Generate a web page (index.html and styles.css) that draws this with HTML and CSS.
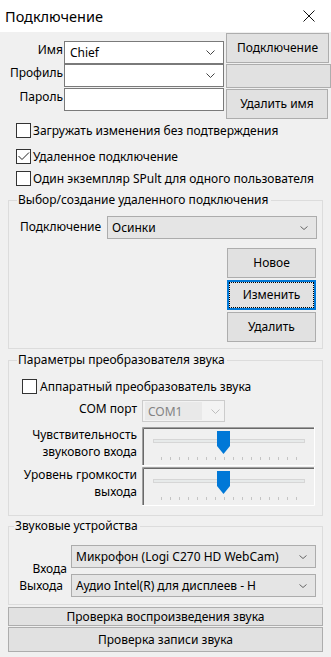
FILE: index.html
```html
<!DOCTYPE html>
<html lang="ru">
<head>
<meta charset="utf-8">
<title>Подключение</title>
<link rel="stylesheet" href="styles.css">
</head>
<body>
<div class="window">
  <div class="titlebar">
    <span class="title">Подключение</span>
    <svg class="close" width="12" height="12" viewBox="0 0 12 12"><path d="M0.5 0.5 L11.5 11.5 M11.5 0.5 L0.5 11.5" stroke="#111" stroke-width="1" fill="none"/></svg>
  </div>

  <div class="login">
    <div class="fields">
      <div class="frow">
        <span class="flabel">Имя</span>
        <div class="combo edit"><span>Chief</span><svg class="chev" width="9" height="5" viewBox="0 0 9 5"><polyline points="0.5,0.5 4.5,4.5 8.5,0.5" fill="none" stroke="#444"/></svg></div>
      </div>
      <div class="frow">
        <span class="flabel">Профиль</span>
        <div class="combo edit"><span></span><svg class="chev" width="9" height="5" viewBox="0 0 9 5"><polyline points="0.5,0.5 4.5,4.5 8.5,0.5" fill="none" stroke="#444"/></svg></div>
      </div>
      <div class="frow r3">
        <span class="flabel">Пароль</span>
        <div class="combo edit"></div>
      </div>
    </div>
    <div class="side">
      <button class="btn s1">Подключение</button>
      <button class="btn s2"></button>
      <button class="btn s3">Удалить имя</button>
    </div>
  </div>

  <div class="checks">
    <label class="check c1"><span class="box"></span><span>Загружать изменения без подтверждения</span></label>
    <label class="check c2"><span class="box"><svg width="13" height="13" viewBox="0 0 13 13"><polyline points="1.5,6 5,9.5 12,2.5" fill="none" stroke="#222" stroke-width="1"/></svg></span><span>Удаленное подключение</span></label>
    <label class="check c3"><span class="box"></span><span>Один экземпляр SPult для одного пользователя</span></label>
  </div>

  <fieldset class="group g1">
    <legend>Выбор/создание удаленного подключения</legend>
    <div class="g1row">
      <span class="g1label">Подключение</span>
      <div class="combo list w210"><span>Осинки</span><svg class="chev" width="8" height="4" viewBox="0 0 8 4"><polyline points="0.5,0.5 4,3.5 7.5,0.5" fill="none" stroke="#666"/></svg></div>
    </div>
    <div class="g1btns">
      <button class="btn gb">Новое</button>
      <button class="btn gb focus">Изменить</button>
      <button class="btn gb">Удалить</button>
    </div>
  </fieldset>

  <fieldset class="group g2">
    <legend>Параметры преобразователя звука</legend>
    <label class="check c4"><span class="box"></span><span>Аппаратный преобразователь звука</span></label>
    <div class="g2grid">
      <span class="glabel com">COM порт</span>
      <div class="combo disabled"><span class="dtext">COM1</span><svg class="chev" width="9" height="5" viewBox="0 0 9 5"><polyline points="0.5,0.5 4.5,4.5 8.5,0.5" fill="none" stroke="#bdbdbd"/></svg></div>

      <span class="glabel sl sl1">Чувствительность<br>звукового входа</span>
      <svg class="slider" width="173" height="39" viewBox="0 0 173 39">
        <rect x="0" y="0" width="173" height="39" fill="#f0f0f0"/>
        <path d="M0.5 39 V0.5 H173" stroke="#a0a0a0" fill="none"/>
        <path d="M1.5 39 V1.5 H172" stroke="#696969" fill="none"/>
        <path d="M172.5 0 V38.5 H0" stroke="#ffffff" fill="none"/>
        <rect x="11.5" y="12.5" width="151" height="3" fill="#e7eaea" stroke="#d6d6d6"/>
        <g stroke="#c4c4c4">
          <path d="M19.5 30V33M28.5 30V33M37.5 30V33M46.5 30V33M55.5 30V33M64.5 30V33M73.5 30V33M82.5 30V33M91.5 30V33M100.5 30V33M109.5 30V33M118.5 30V33M127.5 30V33M136.5 30V33M145.5 30V33M154.5 30V33"/>
        </g>
        <polygon points="75,4 88,4 88,19 81.5,27 75,19" fill="#0078d7"/>
      </svg>

      <span class="glabel sl sl2">Уровень громкости<br>выхода</span>
      <svg class="slider s2nd" width="173" height="39" viewBox="0 0 173 39">
        <rect x="0" y="0" width="173" height="39" fill="#f0f0f0"/>
        <path d="M0.5 39 V0.5 H173" stroke="#a0a0a0" fill="none"/>
        <path d="M1.5 39 V1.5 H172" stroke="#696969" fill="none"/>
        <path d="M172.5 0 V38.5 H0" stroke="#ffffff" fill="none"/>
        <rect x="11.5" y="12.5" width="151" height="3" fill="#e7eaea" stroke="#d6d6d6"/>
        <g stroke="#c4c4c4">
          <path d="M19.5 30V33M28.5 30V33M37.5 30V33M46.5 30V33M55.5 30V33M64.5 30V33M73.5 30V33M82.5 30V33M91.5 30V33M100.5 30V33M109.5 30V33M118.5 30V33M127.5 30V33M136.5 30V33M145.5 30V33M154.5 30V33"/>
        </g>
        <polygon points="75,4 88,4 88,19 81.5,27 75,19" fill="#0078d7"/>
      </svg>
    </div>
  </fieldset>

  <fieldset class="group g3">
    <legend>Звуковые устройства</legend>
    <div class="g3row r1">
      <span class="dlabel">Входа</span>
      <div class="combo list w245"><span>Микрофон (Logi C270 HD WebCam)</span><svg class="chev" width="8" height="4" viewBox="0 0 8 4"><polyline points="0.5,0.5 4,3.5 7.5,0.5" fill="none" stroke="#666"/></svg></div>
    </div>
    <div class="g3row r2">
      <span class="dlabel">Выхода</span>
      <div class="combo list w245"><span>Аудио Intel(R) для дисплеев - H</span><svg class="chev" width="8" height="4" viewBox="0 0 8 4"><polyline points="0.5,0.5 4,3.5 7.5,0.5" fill="none" stroke="#666"/></svg></div>
    </div>
  </fieldset>

  <button class="btn wide w1">Проверка воспроизведения звука</button>
  <button class="btn wide w2">Проверка записи звука</button>
</div>
</body>
</html>
```

FILE: styles.css
```css
* { box-sizing: border-box; }
html, body { margin: 0; padding: 0; }
body {
  width: 331px;
  height: 657px;
  overflow: hidden;
  background: #f0f0f0;
  font-family: "Noto Sans", "DejaVu Sans", sans-serif;
  font-size: 12px;
  color: #000;
}
.window {
  width: 331px;
  height: 657px;
  display: flex;
  flex-direction: column;
  background: #f0f0f0;
}
.titlebar {
  flex: none;
  height: 32px;
  background: #fff;
  display: flex;
  align-items: center;
  justify-content: space-between;
  padding: 0 16px 0 5px;
}
.title { font-size: 14.5px; line-height: 32px; }
.close { display: block; }

/* top login block */
.login { display: flex; gap: 2px; }
.fields { width: 224px; margin-top: 9px; display: flex; flex-direction: column; }
.frow { display: flex; height: 23px; }
.frow.r3 { margin-top: 1px; }
.flabel { width: 64px; text-align: right; line-height: 18px; padding-right: 1px; white-space: nowrap; }

.combo {
  display: flex;
  align-items: center;
  justify-content: space-between;
  white-space: nowrap;
  overflow: hidden;
}
.combo.edit {
  width: 160px;
  height: 23px;
  background: #fff;
  border: 1px solid #7a7a7a;
  padding: 0 8px 0 5px;
}
.combo.list {
  height: 23px;
  background: #e5e5e5;
  border: 1px solid #acacac;
  padding: 0 8px 0 4px;
}
.combo.disabled {
  width: 83px;
  height: 22px;
  background: #f3f3f3;
  border: 1px solid #cccccc;
  padding: 1px 4px 1px 2px;
}
.dtext {
  color: #838383;
  background: #e9e9e9;
  align-self: stretch;
  display: flex;
  align-items: center;
  width: 57px;
  padding-left: 3px;
}
.w210 { width: 210px; height: 24px; }
.w245 { width: 245px; }
.chev { flex: none; display: block; }

.side { display: flex; flex-direction: column; gap: 1px; margin-top: 1px; }
.btn {
  font: inherit;
  color: #000;
  background: #e1e1e1;
  border: 1px solid #adadad;
  padding: 0;
  margin: 0;
  line-height: 16px;
}
.s1 { width: 103px; height: 30px; }
.s2 { width: 105px; height: 24px; }
.s3 { width: 102px; height: 30px; }

/* checkboxes */
.checks { display: flex; flex-direction: column; }
.check { display: flex; align-items: center; height: 22px; white-space: nowrap; }
.box {
  flex: none;
  width: 15px;
  height: 15px;
  border: 1px solid #333;
  background: #fff;
  margin-right: 2px;
  display: flex;
  align-items: center;
  justify-content: center;
}
.box svg { display: block; }
.c1 { padding-left: 16px; }
.c2 { padding-left: 16px; margin-top: 4px; }
.c3 { padding-left: 16px; }

/* group boxes */
.group {
  margin: 0 8px;
  padding: 0;
  border: 1px solid #dcdcdc;
  min-width: 0;
}
.group legend {
  padding: 0 2px 0 1px;
  margin-left: 8px;
  line-height: 16px;
  white-space: nowrap;
}
.g1 { margin-top: 3px; padding-bottom: 6px; }
.g1row { display: flex; align-items: center; margin-top: 8px; padding: 0 5px 0 11px; }
.g1label { flex: 1; white-space: nowrap; margin-top: -3px; }
.g1btns {
  display: flex;
  flex-direction: column;
  gap: 2px;
  margin-top: 9px;
  align-self: flex-end;
  align-items: flex-end;
  padding-right: 6px;
}
.gb { width: 89px; height: 30px; }
.btn.focus {
  border: 1px solid #0078d7;
  box-shadow: inset 0 0 0 1px #0078d7;
  outline: 1px dotted #000;
  outline-offset: -3px;
}

.g2 { margin-top: 3px; padding-bottom: 9px; }
.c4 { padding-left: 13px; margin-top: 7px; }
.c4 .box { margin-right: 3px; }
.g2grid {
  display: grid;
  grid-template-columns: 128px 173px;
  column-gap: 5px;
  margin-top: 3px;
}
.glabel { text-align: right; white-space: nowrap; }
.glabel.com { line-height: 18px; }
.glabel.sl { line-height: 16.5px; }
.glabel.sl1 { margin-top: 5px; }
.glabel.sl2 { margin-top: 1px; }
.slider { display: block; margin-top: 5px; }
.slider.s2nd { margin-top: 1px; }

.g3 { margin-top: 2px; padding-bottom: 7px; }
.group.g3 legend { margin-left: 5px; }
.g3row { display: flex; height: 23px; }
.g3row.r1 { margin-top: 11px; }
.g3row.r2 { margin-top: 6px; }
.dlabel { width: 62px; text-align: right; line-height: 18px; white-space: nowrap; }
.r1 .dlabel { padding-right: 4px; margin-top: 15px; }
.r2 .dlabel { padding-right: 8px; margin-top: 3px; }

.wide { margin: 0 8px; width: 315px; flex: none; }
.w1 { height: 19px; margin-top: 2px; }
.w2 { height: 25px; margin-top: 1px; }
```
